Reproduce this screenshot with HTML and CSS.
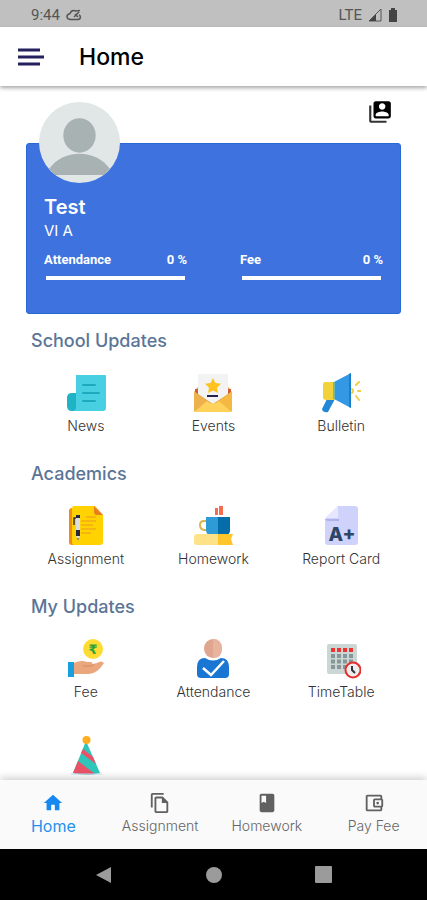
FILE: index.html
```html
<!DOCTYPE html>
<html lang="en">
<head>
    <meta charset="UTF-8">
    <meta name="viewport" content="width=device-width, initial-scale=1.0">
    <title>Home</title>
    <link rel="stylesheet" href="styles.css">
</head>
<body>
    <!-- Status Bar -->
    <div class="status-bar">
        <div class="status-left">
            <span>9:44</span>
            <svg width="16" height="12" viewBox="0 0 16 12" fill="none" stroke="#555" stroke-width="1.500"><path d="M5 10.500C2 10.500 1 9 1 7.500S2.500 5 4 4.500C5 2 7.500 1 10 2l4-.5M5 10.500h7c3 0 3-4 1-4.500M8 8l5-5M9 5l3 3"/></svg>
        </div>
        <div class="status-right">
            <span>LTE</span>
            <svg width="14" height="14" viewBox="0 0 14 14"><path d="M1 13L13 1v12z" fill="none" stroke="#555"/><path d="M1 13l7-7v7z" fill="#444"/></svg>
            <svg width="10" height="14" viewBox="0 0 10 14"><path d="M3 0h4v2h2v12H1V2h2z" fill="#444"/></svg>
        </div>
    </div>

    <!-- App Header -->
    <header class="app-header">
        <button class="menu-button" aria-label="Menu">
            <svg width="28" height="20" viewBox="0 0 28 20" stroke="#25215f" stroke-width="3"><path d="M1 3h22M1 10h26M1 17h22"/></svg>
        </button>
        <h1 class="page-title">Home</h1>
    </header>

    <main class="content">
        <div class="toolbar">
            <button class="switch-button" aria-label="Switch account">
                <svg width="26" height="26" viewBox="0 0 24 24"><path d="M4 6H2v14c0 1.100.9 2 2 2h14v-2H4V6z" fill="#333"/><path d="M20 2H8c-1.100 0-2 .9-2 2v12c0 1.100.9 2 2 2h12c1.100 0 2-.9 2-2V4c0-1.100-.9-2-2-2zm-6 2c1.660 0 3 1.340 3 3s-1.340 3-3 3-3-1.340-3-3 1.340-3 3-3zm6 12H8v-1.500c0-1.990 4-3 6-3s6 1.010 6 3V16z"/></svg>
            </button>
        </div>

        <!-- Student Card -->
        <section class="student-card">
            <svg class="avatar" viewBox="0 0 80 80">
                <circle cx="40" cy="40" r="40" fill="#e1e6e7"/>
                <ellipse cx="40" cy="33" rx="16" ry="17" fill="#a9b2b3"/>
                <path d="M10 66c7-10 18-15 30-15s23 5 30 15q-3 4-6 6H16q-3-2-6-6z" fill="#a9b2b3"/>
            </svg>
            <h2 class="student-name">Test</h2>
            <p class="student-class">VI A</p>
            <div class="stats">
                <div class="stat">
                    <div class="stat-label"><label for="attendance">Attendance</label><span>0 %</span></div>
                    <progress id="attendance" value="0" max="100"></progress>
                </div>
                <div class="stat">
                    <div class="stat-label"><label for="fee">Fee</label><span>0 %</span></div>
                    <progress id="fee" value="0" max="100"></progress>
                </div>
            </div>
        </section>

        <!-- School Updates -->
        <section class="group">
            <h2 class="group-title">School Updates</h2>
            <div class="tiles">
                <a class="tile" href="#">
                    <svg viewBox="0 0 40 40">
                        <path d="M10 2h29q1 0 1 1v32q0 3-3 3H6V22h4z" fill="#48cfe1"/>
                        <path d="M10 20v14q0 4-4 4-5 0-5-5v-8q0-5 5-5z" fill="#1fb3c6"/>
                        <path d="M17 12h12M17 20h16M17 28h12" stroke="#1fa9bf" stroke-width="2" stroke-linecap="round"/>
                    </svg>
                    <span>News</span>
                </a>
                <a class="tile" href="#">
                    <svg viewBox="0 0 40 40">
                        <path d="M2 17l3-3h30l3 3v22H2z" fill="#e8a33d"/>
                        <path d="M2 16h3v5H2zM35 16h3v5h-3z" fill="#cf5d3c"/>
                        <path d="M5 1h30v20L20 31 5 21z" fill="#f3f3f3"/>
                        <path d="M20 5l2.400 5 5.600.7-4 4 1 5.300-5-2.600-5 2.600 1-5.300-4-4 5.600-.7z" fill="#ffc221"/>
                        <path d="M14 23h11" stroke="#252252" stroke-width="2"/>
                        <path d="M1 18l13 10L1 39z" fill="#edb24d"/>
                        <path d="M39 18L26 28l13 11z" fill="#f5b942"/>
                        <path d="M1 39l13-11q6 5 12 0l13 11z" fill="#ffd25c"/>
                    </svg>
                    <span>Events</span>
                </a>
                <a class="tile" href="#">
                    <svg viewBox="0 0 40 40">
                        <path d="M6 26h8l-7 13q-5 1-6-3z" fill="#2588d5"/>
                        <path d="M4 9h10v18H5q-3 0-3-3V12q0-3 2-3z" fill="#f3d13b"/>
                        <path d="M13 9L30 0v35l-17-9z" fill="#3498e4"/>
                        <path d="M28 1l2-1v35l-2-1z" fill="#197fc8"/>
                        <path d="M13 9v17" stroke="#75b9a1" stroke-width="2"/>
                        <path d="M31 16q2 2 0 4M35 12l3-3M37 18h4M35 23l3 4" stroke="#f2cf48" stroke-width="2" stroke-linecap="round" fill="none"/>
                    </svg>
                    <span>Bulletin</span>
                </a>
            </div>
        </section>

        <!-- Academics -->
        <section class="group">
            <h2 class="group-title">Academics</h2>
            <div class="tiles">
                <a class="tile" href="#">
                    <svg viewBox="0 0 40 40">
                        <rect x="3" y="2" width="20" height="37" rx="3" fill="#f08b16"/>
                        <path d="M8 0h21l8 9v27q0 3-3 3H8q-2 0-2-3V3q0-3 2-3z" fill="#ffd200"/>
                        <path d="M28 0l9 9h-6q-3 0-3-3z" fill="#ed7d22"/>
                        <path d="M20 11h10M15 15h15M15 19h12M15 23h15M15 27h10" stroke="#ed9821"/>
                        <path d="M8 19v-7h4" fill="none" stroke="#333" stroke-width="1.500"/>
                        <path d="M10 10q2-3 4 0v20l-2 4-2-4z" fill="#dedede"/>
                        <path d="M10 9h4v3h-4zM10 24h4v6h-4z" fill="#262742"/>
                        <path d="M11 32h2l-1 3z" fill="#777"/>
                    </svg>
                    <span>Assignment</span>
                </a>
                <a class="tile" href="#">
                    <svg viewBox="0 0 40 40">
                        <path d="M22 2h3v7h-3zM26 0h4v9h-4z" fill="#f66d50"/>
                        <path d="M14 15h-3q-4 0-4 4t4 5h3" fill="none" stroke="#dfb34b" stroke-width="2"/>
                        <path d="M13 11h24v13q0 5-5 5H18q-5 0-5-5z" fill="#2e9bd7"/>
                        <path d="M25 11h12v13q0 5-5 5h-7z" fill="#056ea8"/>
                        <path d="M4 28h22v11H4q-3 0-3-3v-5q0-3 3-3z" fill="#ffe187"/>
                        <path d="M25 28h15l-2 5 2 6H25z" fill="#ffc52c"/>
                    </svg>
                    <span>Homework</span>
                </a>
                <a class="tile" href="#">
                    <svg viewBox="0 0 40 40">
                        <path d="M17 0h17q3 0 3 3v33q0 3-3 3H7q-3 0-3-3V13z" fill="#cfd3fb"/>
                        <path d="M17 0v12H4z" fill="#e6e7ff"/>
                        <path d="M4 13h14v2H7q-2 0-3-2z" fill="#afb1e9"/>
                        <text class="grade" x="21" y="35" text-anchor="middle">A+</text>
                    </svg>
                    <span>Report Card</span>
                </a>
            </div>
        </section>

        <!-- My Updates -->
        <section class="group">
            <h2 class="group-title">My Updates</h2>
            <div class="tiles">
                <a class="tile" href="#">
                    <svg viewBox="0 0 40 40">
                        <circle cx="27" cy="10" r="10" fill="#ffdc32"/>
                        <text class="rupee" x="27" y="15" text-anchor="middle">₹</text>
                        <path d="M8 24q4-2 8-2 3 0 5 1h4q3 1 0 3h-3l9-2q4-3 7 0-7 11-15 11H8z" fill="#eaa77d"/>
                        <path d="M17 27h8q2 0 3-2" fill="none" stroke="#d48a61"/>
                        <path d="M2 23h6v15H2z" fill="#199ede"/>
                    </svg>
                    <span>Fee</span>
                </a>
                <a class="tile" href="#">
                    <svg viewBox="0 0 40 40">
                        <path d="M4 35v-7q0-9 8-9h16q8 0 8 9v7q0 4-4 4H8q-4 0-4-4z" fill="#1976d2"/>
                        <path d="M12 17h16v2q-8 5-16 0z" fill="#fff"/>
                        <ellipse cx="20" cy="9.500" rx="9" ry="9.500" fill="#dfa58e"/>
                        <path d="M20 0q9 0 9 9.500T20 19z" fill="#e9b49f"/>
                        <path d="M10 29l8 7 13-14" fill="none" stroke="#fff" stroke-width="2.500"/>
                    </svg>
                    <span>Attendance</span>
                </a>
                <a class="tile" href="#">
                    <svg viewBox="0 0 40 40">
                        <rect x="6" y="5" width="30" height="30" rx="2" fill="#cbd7d5"/>
                        <path d="M10 11h23" stroke="#ed3431" stroke-width="4" stroke-dasharray="4 2"/>
                        <path d="M10 17h23M10 22.500h23M10 28h15" stroke="#879799" stroke-width="4" stroke-dasharray="4 2"/>
                        <circle cx="32" cy="31" r="7.500" fill="#eee" stroke="#e52f2c" stroke-width="2"/>
                        <path d="M31 27v4l3 3" fill="none" stroke="#30363b" stroke-width="2"/>
                    </svg>
                    <span>TimeTable</span>
                </a>
                <a class="tile" href="#" aria-label="Birthday">
                    <svg viewBox="0 0 40 40">
                        <path d="M20 5L7 37q14 3 27 0z" fill="#2fc5b9"/>
                        <path d="M17 13l10 8 3 7-15-11zM12 25l17 13q-11 1-22-1z" fill="#e95267"/>
                        <path d="M5 38h31" stroke="#b7e1f0"/>
                        <circle cx="20.500" cy="4" r="4" fill="#ffad1f"/>
                    </svg>
                </a>
            </div>
        </section>
    </main>

    <!-- Bottom Tabs -->
    <nav class="tab-bar">
        <a class="tab active" href="#">
            <svg viewBox="0 0 24 24"><path d="M10 20v-6h4v6h5v-8h3L12 3 2 12h3v8z"/></svg>
            <span>Home</span>
        </a>
        <a class="tab" href="#">
            <svg viewBox="0 0 24 24"><path d="M16 1H4c-1.100 0-2 .9-2 2v14h2V3h12V1zm-1 4H8c-1.100 0-2 .9-2 2v14c0 1.100.9 2 2 2h11c1.100 0 2-.9 2-2V11l-6-6zM8 21V7h6v5h5v9H8z"/></svg>
            <span>Assignment</span>
        </a>
        <a class="tab" href="#">
            <svg viewBox="0 0 24 24"><path d="M18 2H6c-1.100 0-2 .9-2 2v16c0 1.100.9 2 2 2h12c1.100 0 2-.9 2-2V4c0-1.100-.9-2-2-2zM6 4h5v8l-2.500-1.500L6 12V4z"/></svg>
            <span>Homework</span>
        </a>
        <a class="tab" href="#">
            <svg viewBox="0 0 24 24"><path d="M21 7.300V5c0-1.100-.9-2-2-2H5c-1.100 0-2 .9-2 2v14c0 1.100.9 2 2 2h14c1.100 0 2-.9 2-2v-2.300c.6-.3 1-1 1-1.700V9c0-.7-.4-1.400-1-1.700zM20 9v6h-7V9h7zM5 19V5h14v2h-6c-1.100 0-2 .9-2 2v6c0 1.100.9 2 2 2h6v2H5z"/><circle cx="16" cy="12" r="1.500"/></svg>
            <span>Pay Fee</span>
        </a>
    </nav>

    <!-- System Buttons -->
    <div class="system-bar">
        <button aria-label="Back"><svg width="18" height="18" viewBox="0 0 18 18"><path d="M1 9L16 1v16z"/></svg></button>
        <button aria-label="Home screen"><svg width="18" height="18" viewBox="0 0 18 18"><circle cx="9" cy="9" r="8"/></svg></button>
        <button aria-label="Recent apps"><svg width="18" height="18" viewBox="0 0 18 18"><rect width="17" height="17" rx="1"/></svg></button>
    </div>
</body>
</html>
```

FILE: styles.css
```css
* {
    box-sizing: border-box;
}
html, body {
    margin: 0;
    padding: 0;
    height: 100%;
    overflow: hidden; /* only the content area scrolls */
}
body {
    display: flex;
    flex-direction: column;
    background: #fff;
    font-family: Inter, "Liberation Sans", sans-serif;
}
h1, h2, p {
    margin: 0;
}
a {
    color: inherit;
    text-decoration: none;
}
button {
    display: flex;
    padding: 0;
    border: 0;
    background: none;
    cursor: pointer;
}
.status-bar {
    flex: none;
    display: flex;
    justify-content: space-between;
    align-items: center;
    padding: 2px 29px 0 31px;
    height: 27px;
    background: #c0c0c0;
    color: #555;
    font-family: Roboto, sans-serif;
    font-size: 15px;
    line-height: 20px;
}
.status-left, .status-right {
    display: flex;
    align-items: center;
    gap: 6px;
}
.app-header {
    flex: none;
    position: relative;
    z-index: 1;
    display: flex;
    align-items: center;
    gap: 34px;
    padding: 0 17px;
    height: 59px;
    background: #fff;
    box-shadow: 0 2px 4px rgba(0, 0, 0, 0.35);
}
.page-title {
    font-size: 23px;
    font-weight: 500;
    line-height: 28px;
}
.content {
    flex: 1;
    min-height: 0;
    overflow-y: auto;
    scrollbar-width: none;
}
.toolbar {
    display: flex;
    justify-content: flex-end;
    padding: 13px 34px 18px;
}
.student-card {
    position: relative;
    margin: 0 26px;
    padding: 51px 17px 33px;
    border: 1px solid #2a69d3;
    border-radius: 3px;
    background: #3e72de;
    color: #fff;
}
/* Photo overlaps the top edge of the card */
.avatar {
    position: absolute;
    top: -42px;
    left: 12px;
    width: 81px;
    height: 81px;
}
.student-name {
    font-size: 20px;
    font-weight: 600;
    line-height: 24px;
}
.student-class {
    font-size: 15px;
    line-height: 24px;
}
.stats {
    display: grid;
    grid-template-columns: 1fr 1fr;
    gap: 53px;
    padding-top: 9px;
}
.stat-label {
    display: flex;
    justify-content: space-between;
    font-family: Roboto, sans-serif;
    font-size: 13px;
    font-weight: 700;
    line-height: 16px;
}
progress {
    display: block;
    width: calc(100% - 4px);
    height: 4px;
    margin: 8px 2px 0;
    border: 0;
    background: #fff;
    appearance: none;
}
progress::-webkit-progress-bar {
    background: #fff;
}
.group {
    padding: 15px 22px 12px;
}
.group-title {
    padding-left: 9px;
    color: #5b7597;
    font-size: 18px;
    font-weight: 500;
    line-height: 24px;
}
.tiles {
    display: grid;
    grid-template-columns: repeat(3, 1fr);
    row-gap: 35px;
    padding-top: 20px;
}
.tile {
    display: flex;
    flex-direction: column;
    align-items: center;
    gap: 4px;
    color: #333;
    font-size: 14px;
    font-weight: 300;
    line-height: 18px;
}
.tile svg {
    width: 40px;
    height: 40px;
}
.grade {
    fill: #2c4566;
    font-size: 19px;
    font-weight: 800;
}
.rupee {
    fill: #35a03b;
    font-family: "DejaVu Sans", sans-serif;
    font-size: 13px;
    font-weight: 700;
}
.tab-bar {
    flex: none;
    position: relative;
    display: grid;
    grid-template-columns: repeat(4, 1fr);
    height: 69px;
    background: #fafafa;
    box-shadow: 0 -2px 8px rgba(0, 0, 0, 0.2);
}
.tab {
    display: flex;
    flex-direction: column;
    align-items: center;
    gap: 2px;
    padding-top: 12px;
    color: #666;
    font-size: 14px;
    font-weight: 300;
    line-height: 20px;
}
.tab svg {
    width: 22px;
    height: 22px;
    fill: #606060;
}
.tab.active {
    color: #2491ed;
    font-size: 16px;
    font-weight: 400;
}
.tab.active svg {
    fill: #1688f0;
}
.system-bar {
    flex: none;
    display: flex;
    justify-content: center;
    align-items: center;
    gap: 92px;
    height: 51px;
    background: #000;
}
.system-bar svg {
    fill: #9b9b9b;
}
```
